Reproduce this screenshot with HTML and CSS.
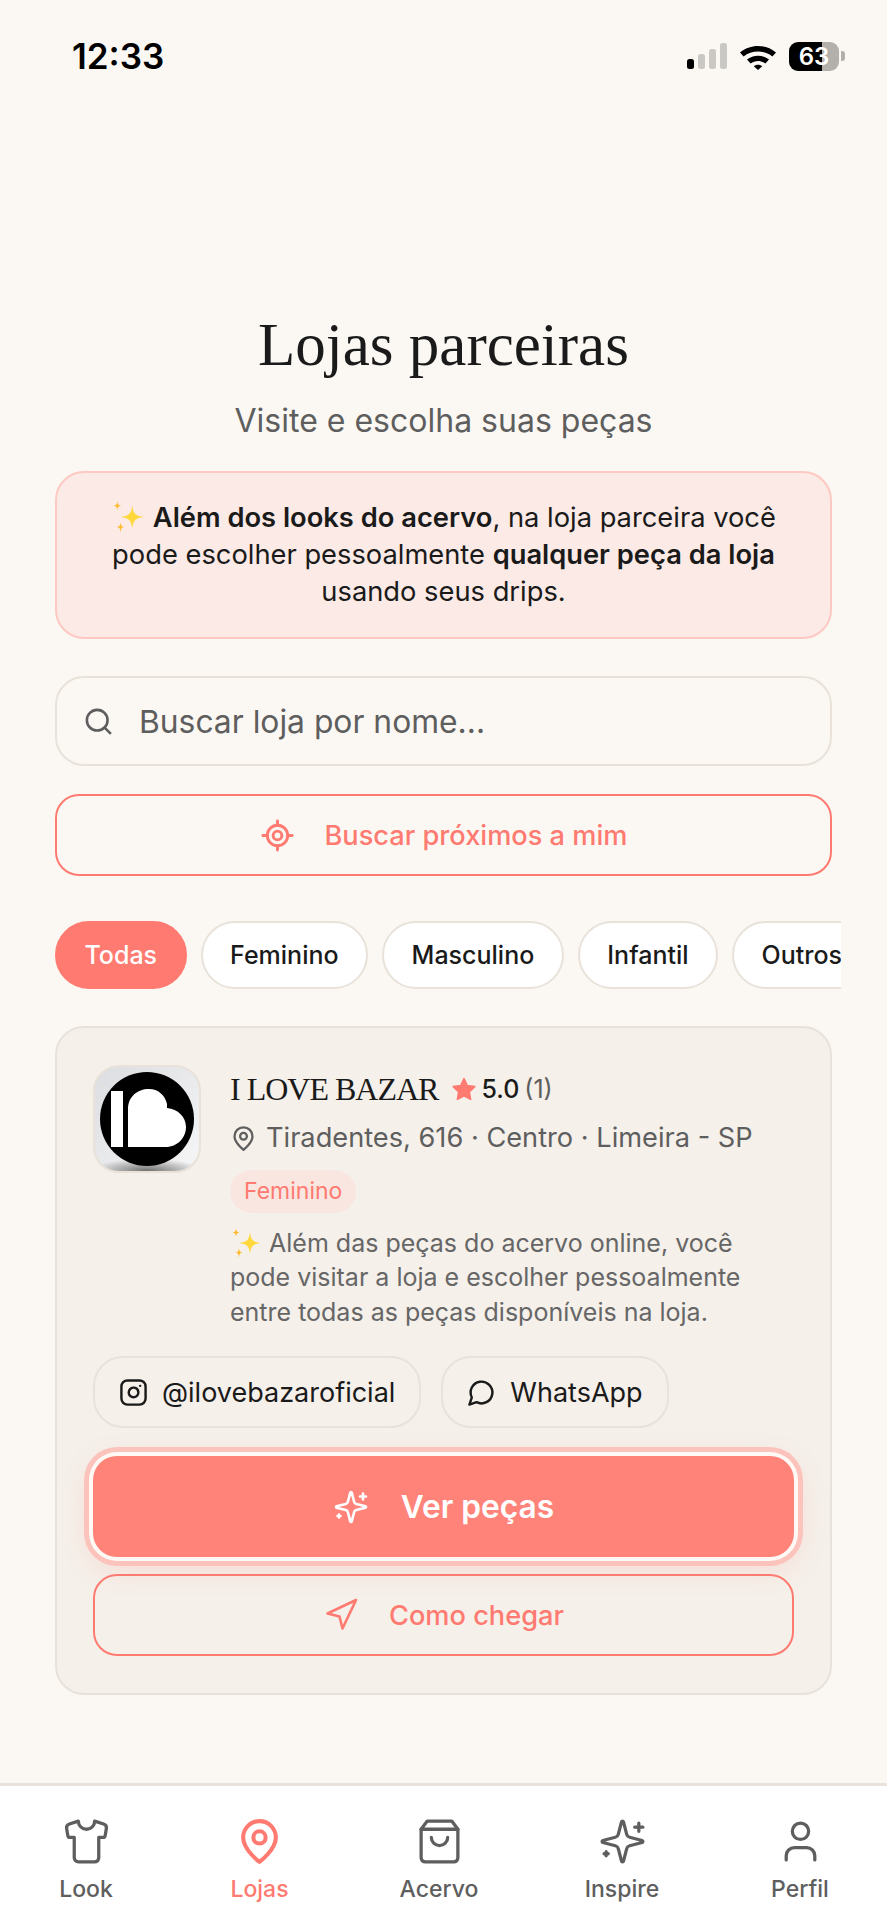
FILE: index.html
```html
<!DOCTYPE html>
<html lang="pt-BR">
<head>
    <meta charset="UTF-8">
    <meta name="viewport" content="width=device-width, initial-scale=1.0">
    <title>Lojas parceiras</title>
    <link rel="stylesheet" href="styles.css">
</head>
<body>
    <div class="app">
        <div class="status-bar">
            <span class="status-time">12:33</span>
            <div class="status-icons">
                <svg class="signal-icon" width="40" height="26" viewBox="0 0 40 26">
                    <rect x="0" y="16" width="7" height="10" rx="2.5" fill="#000"/>
                    <rect x="11" y="11" width="7" height="15" rx="2.5" fill="#c9c8c4"/>
                    <rect x="22" y="6" width="7" height="20" rx="2.5" fill="#c9c8c4"/>
                    <rect x="33" y="0" width="7" height="26" rx="2.5" fill="#c9c8c4"/>
                </svg>
                <svg class="wifi-icon" width="38" height="27" viewBox="0 0 38 27">
                    <path d="M1 9.5C11 .8 27 .8 37 9.5l-3.6 4C25.4 6.8 12.6 6.8 4.6 13.500z" fill="#000"/>
                    <path d="M8 16.600C14 11.400 24 11.400 30 16.600l-3.600 4C22.200 17.200 15.800 17.200 11.600 20.600z" fill="#000"/>
                    <path d="M14.800 23.300C17.200 21.300 20.800 21.300 23.200 23.300L19 27z" fill="#000"/>
                </svg>
                <div class="battery"><span>63</span></div>
                <span class="battery-nub"></span>
            </div>
        </div>

        <main class="page">
            <h1 class="page-title">Lojas parceiras</h1>
            <p class="page-subtitle">Visite e escolha suas peças</p>

            <div class="notice">
                <span class="notice-line">
                    <svg class="sparkle-emoji" viewBox="0 0 32 32"><path d="M20 5c1 8 3 10 11 11-8 1-10 3-11 11-1-8-3-10-11-11 8-1 10-3 11-11z" fill="#ffd83d"/><path d="M6 1c.4 3.400 1 4 3.500 4.500C7 6 6.400 6.600 6 10c-.4-3.400-1-4-3.500-4.500C5 5 5.600 4.400 6 1z" fill="#fdbb2d"/><path d="M9 21c.4 3.400 1 4 3.500 4.500C10 26 9.400 26.600 9 31c-.4-4.400-1-5-3.500-5.500C8 25 8.600 24.400 9 21z" fill="#fdbb2d"/></svg>
                    <strong>Além dos looks do acervo</strong>, na loja parceira você
                </span>
                <span class="notice-line">pode escolher pessoalmente <strong>qualquer peça da loja</strong></span>
                <span class="notice-line">usando seus drips.</span>
            </div>

            <div class="search-box">
                <svg class="icon icon-search" viewBox="0 0 24 24"><circle cx="11" cy="11" r="8"/><path d="m21 21-4.300-4.300"/></svg>
                <input type="text" class="search-input" placeholder="Buscar loja por nome...">
            </div>

            <button type="button" class="btn-outline btn-near">
                <svg class="icon icon-locate" viewBox="0 0 24 24"><line x1="2" x2="5" y1="12" y2="12"/><line x1="19" x2="22" y1="12" y2="12"/><line x1="12" x2="12" y1="2" y2="5"/><line x1="12" x2="12" y1="19" y2="22"/><circle cx="12" cy="12" r="7"/><circle cx="12" cy="12" r="3"/></svg>
                Buscar próximos a mim
            </button>

            <div class="chips">
                <span class="chip chip-active">Todas</span>
                <span class="chip">Feminino</span>
                <span class="chip">Masculino</span>
                <span class="chip">Infantil</span>
                <span class="chip">Outros</span>
            </div>

            <section class="store-card">
                <div class="store-top">
                    <div class="store-logo">
                        <svg viewBox="0 0 104 104" width="104" height="104">
                            <circle cx="52" cy="52" r="47" fill="#000"/>
                            <rect x="16" y="24" width="12" height="56" fill="#fff"/>
                            <path d="M33 80V42C33 30 42 22 54 22C63 22 70 28 72 37C72 39 72 40 72 41C83 42 91 50 91 60C91 71 82 80 71 80Z" fill="#fff"/>
                        </svg>
                    </div>
                    <div class="store-info">
                        <div class="store-head">
                            <span class="store-name">I LOVE BAZAR</span>
                            <svg class="star" viewBox="0 0 24 24"><path d="M12 2.500l3 6.300 6.900 1-5 4.900 1.200 6.900-6.100-3.300-6.100 3.300 1.200-6.900-5-4.900 6.900-1z"/></svg>
                            <span class="store-rating">5.0</span>
                            <span class="store-count">(1)</span>
                        </div>
                        <div class="store-address">
                            <svg class="icon icon-pin" viewBox="0 0 24 24"><path d="M20 10c0 6-8 12-8 12s-8-6-8-12a8 8 0 0 1 16 0Z"/><circle cx="12" cy="10" r="3"/></svg>
                            Tiradentes, 616 · Centro · Limeira - SP
                        </div>
                        <span class="store-tag">Feminino</span>
                        <p class="store-desc">
                            <svg class="sparkle-emoji sparkle-small" viewBox="0 0 32 32"><path d="M20 5c1 8 3 10 11 11-8 1-10 3-11 11-1-8-3-10-11-11 8-1 10-3 11-11z" fill="#ffd83d"/><path d="M6 1c.4 3.400 1 4 3.500 4.500C7 6 6.400 6.600 6 10c-.4-3.400-1-4-3.500-4.500C5 5 5.600 4.400 6 1z" fill="#fdbb2d"/><path d="M9 21c.4 3.400 1 4 3.500 4.500C10 26 9.400 26.600 9 31c-.4-4.400-1-5-3.500-5.500C8 25 8.600 24.400 9 21z" fill="#fdbb2d"/></svg>
                            Além das peças do acervo online, você pode visitar a loja e escolher pessoalmente entre todas as peças disponíveis na loja.
                        </p>
                    </div>
                </div>

                <div class="store-links">
                    <a class="store-link">
                        <svg class="icon icon-social" viewBox="0 0 24 24"><rect x="2" y="2" width="20" height="20" rx="5"/><path d="M16 11.370A4 4 0 1 1 12.630 8 4 4 0 0 1 16 11.370z"/><line x1="17.500" x2="17.510" y1="6.500" y2="6.500"/></svg>
                        @ilovebazaroficial
                    </a>
                    <a class="store-link">
                        <svg class="icon icon-social" viewBox="0 0 24 24"><path d="M7.900 20A9 9 0 1 0 4 16.100L2 22Z"/></svg>
                        WhatsApp
                    </a>
                </div>

                <button type="button" class="btn-primary">
                    <svg class="icon icon-btn" viewBox="0 0 24 24"><path d="M9.937 15.500A2 2 0 0 0 8.500 14.063l-6.135-1.582a.5.5 0 0 1 0-.962L8.500 9.936A2 2 0 0 0 9.937 8.500l1.582-6.135a.5.5 0 0 1 .963 0L14.063 8.500A2 2 0 0 0 15.500 9.937l6.135 1.581a.5.5 0 0 1 0 .964L15.500 14.063a2 2 0 0 0-1.437 1.437l-1.582 6.135a.5.5 0 0 1-.963 0z"/><path d="M20 3v4M22 5h-4M4 17v2M5 18H3"/></svg>
                    Ver peças
                </button>
                <button type="button" class="btn-outline btn-route">
                    <svg class="icon icon-btn" viewBox="0 0 24 24"><polygon points="3 11 22 2 13 21 11 13 3 11"/></svg>
                    Como chegar
                </button>
            </section>
        </main>

        <nav class="tab-bar">
            <a class="tab">
                <svg class="icon tab-icon" viewBox="0 0 24 24"><path d="M20.380 3.460 16 2a4 4 0 0 1-8 0L3.620 3.460a2 2 0 0 0-1.340 2.230l.58 3.470a1 1 0 0 0 .99.84H6v10c0 1.100.9 2 2 2h8a2 2 0 0 0 2-2V10h2.150a1 1 0 0 0 .99-.84l.58-3.470a2 2 0 0 0-1.340-2.230z"/></svg>
                Look
            </a>
            <a class="tab tab-active">
                <svg class="icon tab-icon" viewBox="0 0 24 24"><path d="M20 10c0 6-8 12-8 12s-8-6-8-12a8 8 0 0 1 16 0Z"/><circle cx="12" cy="10" r="3"/></svg>
                Lojas
            </a>
            <a class="tab">
                <svg class="icon tab-icon" viewBox="0 0 24 24"><path d="M6 2 3 6v14a2 2 0 0 0 2 2h14a2 2 0 0 0 2-2V6l-3-4Z"/><path d="M3 6h18"/><path d="M16 10a4 4 0 0 1-8 0"/></svg>
                Acervo
            </a>
            <a class="tab">
                <svg class="icon tab-icon" viewBox="0 0 24 24"><path d="M9.937 15.500A2 2 0 0 0 8.500 14.063l-6.135-1.582a.5.5 0 0 1 0-.962L8.500 9.936A2 2 0 0 0 9.937 8.500l1.582-6.135a.5.5 0 0 1 .963 0L14.063 8.500A2 2 0 0 0 15.500 9.937l6.135 1.581a.5.5 0 0 1 0 .964L15.500 14.063a2 2 0 0 0-1.437 1.437l-1.582 6.135a.5.5 0 0 1-.963 0z"/><path d="M20 3v4M22 5h-4M4 17v2M5 18H3"/></svg>
                Inspire
            </a>
            <a class="tab">
                <svg class="icon tab-icon" viewBox="0 0 24 24"><path d="M19 21v-2a4 4 0 0 0-4-4H9a4 4 0 0 0-4 4v2"/><circle cx="12" cy="7" r="4"/></svg>
                Perfil
            </a>
        </nav>
    </div>
</body>
</html>
```

FILE: styles.css
```css
* {
    box-sizing: border-box;
}

body {
    margin: 0;
    background-color: #fbf8f3;
    color: #1a1a1a;
    font-family: "Inter", "Liberation Sans", sans-serif;
}

.app {
    display: flex;
    flex-direction: column;
    width: 887px;
    height: 1920px;
    overflow: hidden;
}

.icon {
    fill: none;
    stroke: currentColor;
    stroke-width: 2;
    stroke-linecap: round;
    stroke-linejoin: round;
    flex-shrink: 0;
}

/* status bar */
.status-bar {
    display: flex;
    justify-content: space-between;
    align-items: center;
    height: 56px;
    margin-top: 28px;
    padding: 0 42px 0 72px;
}

.status-time {
    font-size: 35px;
    font-weight: 600;
    color: #000;
}

.status-icons {
    display: flex;
    align-items: center;
}

.wifi-icon {
    margin: 0 12px;
}

.battery {
    display: flex;
    justify-content: center;
    align-items: center;
    width: 50px;
    height: 29px;
    border-radius: 9px;
    background: linear-gradient(90deg, #000 66%, #b3afaa 66%);
    color: #fff;
    font-size: 24px;
    font-weight: 600;
}

.battery-nub {
    width: 4px;
    height: 10px;
    margin-left: 2px;
    border-radius: 0 3px 3px 0;
    background-color: #b3afaa;
}

/* page */
.page {
    flex: 1;
    padding: 225px 55px 0;
}

.page-title {
    margin: 0;
    font-family: "Liberation Serif", serif;
    font-size: 61px;
    font-weight: 400;
    line-height: 72px;
    text-align: center;
}

.page-subtitle {
    margin: 20px 0 0;
    color: #5e5e5e;
    font-size: 32px;
    line-height: 40px;
    text-align: center;
}

.notice {
    margin-top: 30px;
    padding: 26px 20px 27px;
    border: 2px solid #fdc9c2;
    border-radius: 29px;
    background-color: #fbeae6;
    font-size: 27.3px;
    line-height: 37px;
    text-align: center;
}

.notice-line {
    display: block;
}

.notice strong {
    font-weight: 600;
}

.sparkle-emoji {
    width: 34px;
    height: 34px;
    vertical-align: -7px;
}

.sparkle-small {
    width: 32px;
    height: 32px;
}

.search-box {
    display: flex;
    align-items: center;
    gap: 23px;
    height: 90px;
    margin-top: 37px;
    padding: 0 26px;
    border: 2px solid #e8e2da;
    border-radius: 29px;
}

.icon-search {
    width: 31px;
    height: 31px;
    color: #5e5e5e;
}

.search-input {
    flex: 1;
    min-width: 0;
    border: 0;
    outline: 0;
    background: transparent;
    font-family: inherit;
    font-size: 31.8px;
}

.search-input::placeholder {
    color: #5e5e5e;
    opacity: 1;
}

.btn-outline {
    display: flex;
    justify-content: center;
    align-items: center;
    gap: 30px;
    width: 100%;
    border: 2px solid #ff7a70;
    border-radius: 24px;
    background: transparent;
    color: #ff7a70;
    font-family: inherit;
    font-weight: 500;
    font-size: 27.2px;
}

.btn-near {
    height: 82px;
    margin-top: 28px;
}

.icon-locate {
    width: 35px;
    height: 35px;
}

.chips {
    display: flex;
    gap: 14px;
    width: 786px;
    margin-top: 45px;
    overflow: hidden;
}

.chip {
    flex-shrink: 0;
    padding: 0 27.5px;
    border: 2px solid #e8e2da;
    border-radius: 34px;
    background-color: #fff;
    font-size: 25px;
    font-weight: 500;
    line-height: 64px;
}

.chip-active {
    border-color: #ff7a70;
    background-color: #ff7a70;
    color: #fff;
}

/* store card */
.store-card {
    margin-top: 37px;
    padding: 37px 36px;
    border: 2px solid #e8e2da;
    border-radius: 29px;
    background-color: #f5f0ea;
}

.store-top {
    display: flex;
    gap: 29px;
}

.store-logo {
    flex-shrink: 0;
    width: 108px;
    height: 108px;
    border: 2px solid #e8e2da;
    border-radius: 26px;
    background: radial-gradient(ellipse 55% 12% at 50% 100%, #6f6f6f, transparent), linear-gradient(135deg, #dcdde0, #f6f6f7);
    overflow: hidden;
}

.store-logo svg {
    display: block;
}

.store-head {
    display: flex;
    align-items: center;
    height: 46px;
    margin-top: 1px;
}

.store-name {
    margin-right: 13px;
    font-family: "Liberation Serif", serif;
    font-size: 32px;
    letter-spacing: -1px;
}

.star {
    width: 26px;
    height: 26px;
    margin-right: 4px;
    fill: #ff7a70;
    stroke: #ff7a70;
    stroke-width: 1.5;
    stroke-linejoin: round;
}

.store-rating {
    margin-right: 5px;
    font-size: 25px;
    font-weight: 500;
}

.store-count {
    color: #5e5e5e;
    font-size: 25px;
}

.store-address {
    display: flex;
    align-items: center;
    gap: 9px;
    margin-top: 6px;
    color: #5e5e5e;
    font-size: 27.2px;
    line-height: 40px;
}

.icon-pin {
    width: 27px;
    height: 27px;
}

.store-tag {
    display: inline-block;
    margin-top: 12px;
    padding: 0 14px;
    border-radius: 22px;
    background-color: #f9e6e1;
    color: #ff7a70;
    font-size: 23px;
    line-height: 43px;
}

.store-desc {
    margin: 12.5px 0 0;
    color: #666;
    font-size: 25px;
    line-height: 34.5px;
}

.store-links {
    display: flex;
    gap: 20px;
    margin-top: 27px;
}

.store-link {
    display: flex;
    align-items: center;
    gap: 14px;
    height: 72px;
    padding: 0 24px;
    border: 2px solid #e8e2da;
    border-radius: 30px;
    font-size: 27px;
}

.icon-social {
    width: 29px;
    height: 29px;
}

.btn-primary {
    display: flex;
    justify-content: center;
    align-items: center;
    gap: 32px;
    width: 100%;
    height: 101px;
    margin-top: 28px;
    border: 0;
    border-radius: 24px;
    background-color: #ff8378;
    box-shadow: 0 0 0 4px #fff9f5, 0 0 0 9px #fcc3bc, 0 8px 30px rgba(255, 122, 112, 0.25);
    color: #fff;
    font-family: inherit;
    font-size: 31.7px;
    font-weight: 600;
}

.icon-btn {
    width: 36px;
    height: 36px;
    stroke-width: 1.75;
}

.btn-route {
    height: 82px;
    margin-top: 17px;
}

/* tab bar */
.tab-bar {
    display: grid;
    grid-template-columns: 172px 175px 184px 182px 174px;
    height: 137px;
    padding-top: 31px;
    border-top: 3px solid #e8e2da;
    background-color: #fff;
}

.tab {
    display: flex;
    flex-direction: column;
    align-items: center;
    color: #5e5e5e;
    font-size: 23px;
    font-weight: 500;
    line-height: 30px;
}

.tab-active {
    color: #ff7a70;
}

.tab-icon {
    width: 49px;
    height: 49px;
    margin-bottom: 8px;
    stroke-width: 1.6;
}

.tab-active .tab-icon {
    stroke-width: 2;
}
```
